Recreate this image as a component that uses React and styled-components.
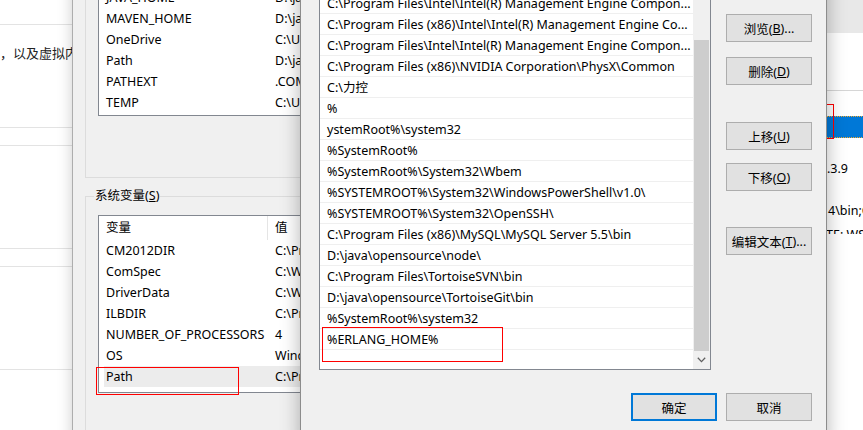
import React from "react";
import styled, { createGlobalStyle } from "styled-components";

const GlobalStyle = createGlobalStyle`
  html, body {
    margin: 0;
    padding: 0;
    background: #fff;
  }
  body {
    font-family: "Noto Sans", "Noto Sans CJK SC", sans-serif;
  }
`;

const userVars = [
  ["JAVA_HOME", "D:\\java\\jdk1.8.0_131"],
  ["MAVEN_HOME", "D:\\java\\apache-maven-3.5.0"],
  ["OneDrive", "C:\\Users\\Administrator\\OneDrive"],
  ["Path", "D:\\java\\jdk1.8.0_131\\bin"],
  ["PATHEXT", ".COM;.EXE;.BAT;.CMD;.VBS"],
  ["TEMP", "C:\\Users\\Administrator\\AppData\\Local\\Temp"],
];

const sysVars = [
  ["CM2012DIR", "C:\\Program Files (x86)\\CM2012"],
  ["ComSpec", "C:\\WINDOWS\\system32\\cmd.exe"],
  ["DriverData", "C:\\Windows\\System32\\Drivers\\DriverData"],
  ["ILBDIR", "C:\\Program Files (x86)\\ILB"],
  ["NUMBER_OF_PROCESSORS", "4"],
  ["OS", "Windows_NT"],
  ["Path", "C:\\Program Files (x86)\\Common Files"],
];

const pathEntries = [
  "C:\\Program Files\\Intel\\Intel(R) Management Engine Compon...",
  "C:\\Program Files (x86)\\Intel\\Intel(R) Management Engine Co...",
  "C:\\Program Files\\Intel\\Intel(R) Management Engine Compon...",
  "C:\\Program Files (x86)\\NVIDIA Corporation\\PhysX\\Common",
  "C:\\力控",
  "%",
  "ystemRoot%\\system32",
  "%SystemRoot%",
  "%SystemRoot%\\System32\\Wbem",
  "%SYSTEMROOT%\\System32\\WindowsPowerShell\\v1.0\\",
  "%SYSTEMROOT%\\System32\\OpenSSH\\",
  "C:\\Program Files (x86)\\MySQL\\MySQL Server 5.5\\bin",
  "D:\\java\\opensource\\node\\",
  "C:\\Program Files\\TortoiseSVN\\bin",
  "D:\\java\\opensource\\TortoiseGit\\bin",
  "%SystemRoot%\\system32",
  "%ERLANG_HOME%",
  "",
];

export default function App() {
  return (
    <>
      <GlobalStyle />
      <Desktop>
        <BackPage>
          <BackRow $h={24} />
          <BackRow $h={102}>
            <BackText>，以及虚拟内存的设置</BackText>
          </BackRow>
          <BackRow $h={17} />
          <BackRow $h={102} />
          <BackRow $h={17} />
          <BackRow $h={102} />
        </BackPage>

        <RightWindow>
          <TopBand />
          <RightSection />
          <SelectedBar />
          <RightText $mt={23} $pl={67}>.3.9</RightText>
          <RightText $mt={26} $pl={68}>4\bin;C:\Windows</RightText>
          <ClippedText>
            <RightText $mt={0} $pl={66}>TE: WSL</RightText>
          </ClippedText>
          <RedMark style={{ left: 40, top: 104, width: 34, height: 35 }} />
        </RightWindow>

        <EnvDialog>
          <UserGroup>
            <ListBox $h={154}>
              <ListHeader>
                <HeadName>变量</HeadName>
                <HeadValue>值</HeadValue>
              </ListHeader>
              {userVars.map(([n, v]) => (
                <VarRow key={n}>
                  <NameCell>{n}</NameCell>
                  <ValueCell>{v}</ValueCell>
                </VarRow>
              ))}
            </ListBox>
          </UserGroup>
          <SysGroup>
            <GroupLegend>
              系统变量(<u>S</u>)
            </GroupLegend>
            <ListBox $h={178}>
              <ListHeader>
                <HeadName>变量</HeadName>
                <HeadValue>值</HeadValue>
              </ListHeader>
              {sysVars.map(([n, v]) => (
                <VarRow key={n} $selected={n === "Path"}>
                  <NameCell>{n}</NameCell>
                  <ValueCell>{v}</ValueCell>
                </VarRow>
              ))}
            </ListBox>
          </SysGroup>
        </EnvDialog>
        <RedMark style={{ left: 96, top: 367, width: 143, height: 28 }} />

        <EditDialog>
          <EditBody>
            <PathList>
              <PathRows>
                {pathEntries.map((p, i) => (
                  <PathRow key={i}>{p}</PathRow>
                ))}
              </PathRows>
              <ScrollBar>
                <ScrollTrack />
                <ScrollThumb />
                <ScrollArrow>
                  <svg width="9" height="6" viewBox="0 0 9 6">
                    <path d="M0.8 0.8 L4.5 4.6 L8.2 0.8" fill="none" stroke="#606060" strokeWidth="1.3" />
                  </svg>
                </ScrollArrow>
              </ScrollBar>
            </PathList>
            <ButtonColumn>
              <DlgButton $mt={22}>
                浏览(<u>B</u>)...
              </DlgButton>
              <DlgButton $mt={15}>
                删除(<u>D</u>)
              </DlgButton>
              <DlgButton $mt={37}>
                上移(<u>U</u>)
              </DlgButton>
              <DlgButton $mt={13}>
                下移(<u>O</u>)
              </DlgButton>
              <DlgButton $mt={36}>
                编辑文本(<u>T</u>)...
              </DlgButton>
            </ButtonColumn>
          </EditBody>
          <Footer>
            <DlgButton $primary>确定</DlgButton>
            <DlgButton>取消</DlgButton>
          </Footer>
        </EditDialog>
        <RedMark style={{ left: 322, top: 327, width: 181, height: 35 }} />
      </Desktop>
    </>
  );
}

const Desktop = styled.div`
  position: relative;
  width: 863px;
  height: 430px;
  overflow: hidden;
  background: #fff;
  font-size: 12.5px;
  color: #000;
`;

const BackPage = styled.div`
  position: absolute;
  left: 0;
  top: 0;
  width: 120px;
  display: flex;
  flex-direction: column;
`;

const BackRow = styled.div`
  height: ${(p) => p.$h}px;
  border-bottom: 1px solid #e3e3e3;
  box-sizing: content-box;
`;

const BackText = styled.div`
  font-size: 13px;
  line-height: 18px;
  color: #222;
  white-space: nowrap;
  padding-top: 19px;
`;

const RightWindow = styled.div`
  position: absolute;
  left: 760px;
  top: 0;
  width: 160px;
  height: 430px;
  background: #fff;
  display: flex;
  flex-direction: column;
`;

const TopBand = styled.div`
  height: 33px;
  background: #e8e8e8;
`;

const RightSection = styled.div`
  height: 57px;
  border-bottom: 1px solid #d6d6d6;
`;

const SelectedBar = styled.div`
  margin-top: 25px;
  height: 20px;
  background: #0078d7;
  border-top: 1px dotted #f0a830;
  border-bottom: 1px dotted #f0a830;
`;

const RightText = styled.div`
  margin-top: ${(p) => p.$mt}px;
  padding-left: ${(p) => p.$pl}px;
  line-height: 16px;
  white-space: nowrap;
`;

const ClippedText = styled.div`
  margin-top: 8px;
  height: 7px;
  overflow: hidden;
`;

const RedMark = styled.div`
  position: absolute;
  box-sizing: border-box;
  border: 1px solid #f00;
  pointer-events: none;
`;

const EnvDialog = styled.div`
  position: absolute;
  left: 72px;
  top: -60px;
  width: 480px;
  height: 520px;
  box-sizing: border-box;
  padding-left: 12px;
  background: #f0f0f0;
  border: 1px solid #adadad;
  box-shadow: 0 0 14px rgba(0, 0, 0, 0.2);
`;

const UserGroup = styled.div`
  margin-top: 9px;
  width: 420px;
  padding: 11px 0 61px 12px;
  border: 1px solid #dcdcdc;
`;

const SysGroup = styled.fieldset`
  margin: 11px 0 0 0;
  width: 420px;
  padding: 12px 0 40px 12px;
  border: 1px solid #dcdcdc;
  min-width: 0;
`;

const GroupLegend = styled.legend`
  line-height: 14px;
  padding: 0 1px;
  margin-left: -4px;
`;

const ListBox = styled.div`
  width: 380px;
  height: ${(p) => p.$h}px;
  box-sizing: border-box;
  border: 1px solid #828790;
  background: #fff;
  overflow: hidden;
`;

const ListHeader = styled.div`
  display: flex;
  height: 24px;
  line-height: 24px;
`;

const HeadName = styled.div`
  flex: none;
  width: 169px;
  box-sizing: border-box;
  padding-left: 7px;
  border-right: 1px solid #e5e5e5;
`;

const HeadValue = styled.div`
  padding-left: 7px;
`;

const VarRow = styled.div`
  display: flex;
  height: 21px;
  line-height: 21px;
  margin-left: 5px;
  background: ${(p) => (p.$selected ? "#ececec" : "transparent")};
  white-space: nowrap;
`;

const NameCell = styled.div`
  flex: none;
  width: 164px;
  padding-left: 2px;
  box-sizing: border-box;
  overflow: hidden;
`;

const ValueCell = styled.div`
  padding-left: 7px;
`;

const EditDialog = styled.div`
  position: absolute;
  left: 300px;
  top: -40px;
  width: 527px;
  box-sizing: border-box;
  padding: 31px 14px 24px 18px;
  background: #f0f0f0;
  border: 1px solid #8c8c8c;
  box-shadow: 0 0 18px rgba(0, 0, 0, 0.3);
`;

const EditBody = styled.div`
  display: flex;
  gap: 15px;
`;

const PathList = styled.div`
  width: 392px;
  height: 378px;
  box-sizing: border-box;
  border: 1px solid #828790;
  background: #fff;
  display: flex;
  overflow: hidden;
`;

const PathRows = styled.div`
  flex: 1;
  min-width: 0;
  display: flex;
  flex-direction: column;
`;

const PathRow = styled.div`
  flex: none;
  height: 21px;
  box-sizing: border-box;
  padding: 1px 0 0 7px;
  line-height: 20px;
  border-bottom: 1px solid #efefef;
  white-space: nowrap;
  overflow: hidden;
`;

const ScrollBar = styled.div`
  width: 17px;
  display: flex;
  flex-direction: column;
  background: #f0f0f0;
`;

const ScrollTrack = styled.div`
  height: 47px;
`;

const ScrollThumb = styled.div`
  flex: 1;
  margin: 0 1px;
  background: #cdcdcd;
`;

const ScrollArrow = styled.div`
  height: 18px;
  display: flex;
  align-items: center;
  justify-content: center;
`;

const ButtonColumn = styled.div`
  display: flex;
  flex-direction: column;
`;

const DlgButton = styled.div`
  width: 86px;
  height: 28px;
  box-sizing: border-box;
  margin-top: ${(p) => p.$mt || 0}px;
  display: flex;
  align-items: center;
  justify-content: center;
  background: #e1e1e1;
  border: ${(p) => (p.$primary ? "2px solid #0078d7" : "1px solid #adadad")};
  white-space: nowrap;
`;

const Footer = styled.div`
  margin-top: 23px;
  display: flex;
  justify-content: flex-end;
  gap: 9px;
`;
